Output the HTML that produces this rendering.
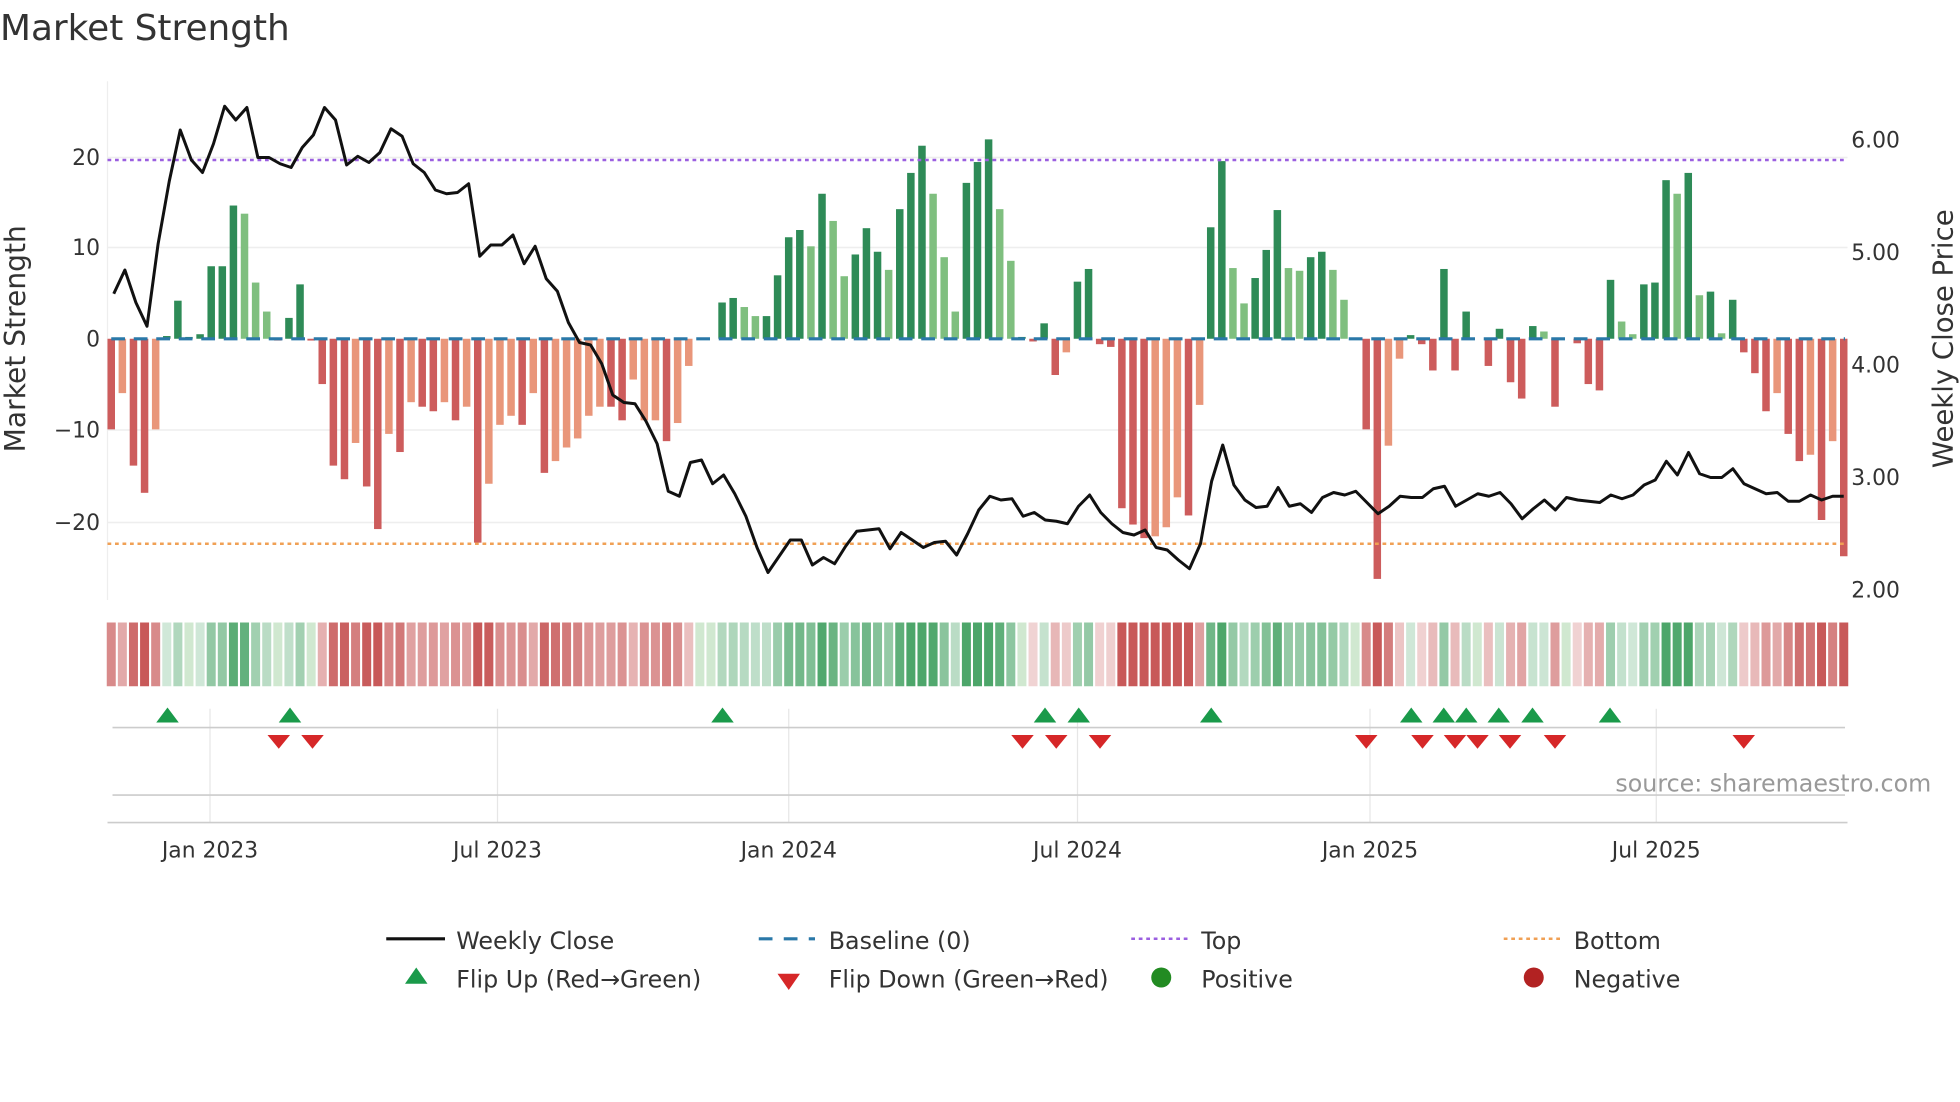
<!DOCTYPE html>
<html><head><meta charset="utf-8">
<style>
html,body{margin:0;padding:0;background:#fff;width:1960px;height:1102px;overflow:hidden}
svg{display:block}
text{font-family:"DejaVu Sans","Liberation Sans",sans-serif;fill:#333}
</style></head><body>
<svg id="s" width="1960" height="1102" viewBox="0 0 1568 881.6" xmlns="http://www.w3.org/2000/svg">
<rect width="1568" height="882" fill="#fff"/>
<text x="0" y="32" font-size="28.7">Market Strength</text>
<g id="grid"></g>
<g id="bars"></g>
<line x1="86" y1="128" x2="1476" y2="128" stroke="#9b5fe0" stroke-width="2" stroke-dasharray="3,3"/>
<line x1="86" y1="435" x2="1476" y2="435" stroke="#f0a055" stroke-width="2" stroke-dasharray="3,3"/>
<line x1="89" y1="271" x2="1476" y2="271" stroke="#2a78a8" stroke-width="2.5" stroke-dasharray="11,7"/>
<polyline id="pl" fill="none" stroke="#111" stroke-width="2.4" stroke-linejoin="round"/>
<g id="strip"></g>
<g id="marks"></g>
<g font-size="17.5">
<text x="80" y="132" text-anchor="end">20</text>
<text x="80" y="204" text-anchor="end">10</text>
<text x="80" y="277" text-anchor="end">0</text>
<text x="80" y="350" text-anchor="end">−10</text>
<text x="80" y="424" text-anchor="end">−20</text>
<text x="1481" y="118">6.00</text>
<text x="1481" y="208">5.00</text>
<text x="1481" y="298">4.00</text>
<text x="1481" y="388">3.00</text>
<text x="1481" y="478">2.00</text>
<text x="168" y="686" text-anchor="middle">Jan 2023</text>
<text x="398" y="686" text-anchor="middle">Jul 2023</text>
<text x="631" y="686" text-anchor="middle">Jan 2024</text>
<text x="862" y="686" text-anchor="middle">Jul 2024</text>
<text x="1096" y="686" text-anchor="middle">Jan 2025</text>
<text x="1325" y="686" text-anchor="middle">Jul 2025</text>
</g>
<text transform="translate(20,271) rotate(-90)" font-size="22.5" text-anchor="middle">Market Strength</text>
<text transform="translate(1562,271) rotate(-90)" font-size="22" text-anchor="middle">Weekly Close Price</text>
<text x="1545" y="633" font-size="19" text-anchor="end" style="fill:#999">source: sharemaestro.com</text>
<g font-size="19">
<line x1="309" y1="751" x2="356" y2="751" stroke="#111" stroke-width="2.5"/>
<text x="365" y="759">Weekly Close</text>
<line x1="607" y1="751" x2="652" y2="751" stroke="#2a78a8" stroke-width="2.5" stroke-dasharray="11,9"/>
<text x="663" y="759">Baseline (0)</text>
<line x1="905" y1="751" x2="950" y2="751" stroke="#9b5fe0" stroke-width="2" stroke-dasharray="3,3"/>
<text x="961" y="759">Top</text>
<line x1="1203" y1="751" x2="1248" y2="751" stroke="#f0a055" stroke-width="2" stroke-dasharray="3,3"/>
<text x="1259" y="759">Bottom</text>
<polygon points="333,774 324,787 342,787" fill="#1a9a4a"/>
<text x="365" y="790">Flip Up (Red→Green)</text>
<polygon points="622,779 640,779 631,792" fill="#d62728"/>
<text x="663" y="790">Flip Down (Green→Red)</text>
<circle cx="929" cy="782" r="8" fill="#228b22"/>
<text x="961" y="790">Positive</text>
<circle cx="1227" cy="782" r="8" fill="#b22222"/>
<text x="1259" y="790">Negative</text>
</g>
</svg>
<script>
var NS="http://www.w3.org/2000/svg";
function el(p,t,a){var e=document.createElementNS(NS,t);for(var k in a)e.setAttribute(k,a[k]);document.getElementById(p).appendChild(e);return e;}
[126,198,344,418].forEach(function(y){el("grid","line",{x1:86,x2:1478,y1:y,y2:y,stroke:"#eeeeee","stroke-width":1.2});});
el("grid","line",{x1:86,x2:86,y1:65,y2:480,stroke:"#eee","stroke-width":1});
[168,398,631,862,1096,1325].forEach(function(x){el("grid","line",{x1:x,x2:x,y1:567,y2:658,stroke:"#e6e6e6","stroke-width":1});});
el("grid","line",{x1:90,x2:1476,y1:582,y2:582,stroke:"#ccc","stroke-width":1.3});
el("grid","line",{x1:90,x2:1476,y1:636,y2:636,stroke:"#ccc","stroke-width":1.3});
el("grid","line",{x1:86,x2:1478,y1:658,y2:658,stroke:"#ccc","stroke-width":1.3});
var B=[[-10,1],[-6,0],[-14,1],[-17,1],[-10,0],[0.3,1],[4.2,1],[0.2,1],[0.5,1],[8,1],[8,1],[14.7,1],[13.8,0],[6.2,0],[3,0],[-0.2,1],[2.3,1],[6,1],[-0.2,1],[-5,1],[-14,1],[-15.5,1],[-11.5,0],[-16.3,1],[-21,1],[-10.5,0],[-12.5,1],[-7,0],[-7.5,1],[-8,1],[-7,0],[-9,1],[-7.5,0],[-22.5,1],[-16,0],[-9.5,0],[-8.5,0],[-9.5,1],[-6,0],[-14.8,1],[-13.5,0],[-12,0],[-11,0],[-8.5,0],[-7.5,0],[-7.5,1],[-9,1],[-4.5,0],[-9,0],[-9,0],[-11.3,1],[-9.3,0],[-3,0],[0,0],[0,0],[4,1],[4.5,1],[3.5,0],[2.5,0],[2.5,1],[7,1],[11.2,1],[12,1],[10.2,0],[16,1],[13,0],[6.9,0],[9.3,1],[12.2,1],[9.6,1],[7.6,0],[14.3,1],[18.3,1],[21.3,1],[16,0],[9,0],[3,0],[17.2,1],[19.5,1],[22,1],[14.3,0],[8.6,0],[0.2,1],[-0.3,1],[1.7,1],[-4,1],[-1.5,0],[6.3,1],[7.7,1],[-0.6,1],[-0.9,1],[-18.7,1],[-20.5,1],[-22,1],[-21.8,0],[-20.8,0],[-17.5,0],[-19.5,1],[-7.3,0],[12.3,1],[19.6,1],[7.8,0],[3.9,0],[6.7,1],[9.8,1],[14.2,1],[7.8,0],[7.5,0],[9,1],[9.6,1],[7.6,0],[4.3,0],[0,0],[-10,1],[-26.5,1],[-11.8,0],[-2.2,0],[0.4,1],[-0.6,1],[-3.5,1],[7.7,1],[-3.5,1],[3,1],[0,0],[-3,1],[1.1,1],[-4.8,1],[-6.6,1],[1.4,1],[0.8,0],[-7.5,1],[0,0],[-0.5,1],[-5,1],[-5.7,1],[6.5,1],[1.9,0],[0.5,0],[6,1],[6.2,1],[17.5,1],[16,0],[18.3,1],[4.8,0],[5.2,1],[0.6,0],[4.3,1],[-1.5,1],[-3.8,1],[-8,1],[-6,0],[-10.5,1],[-13.5,1],[-12.8,0],[-20,1],[-11.3,0],[-24,1]];
var N=B.length,x0=89,x1=1475,st=(x1-x0)/(N-1);
B.forEach(function(b,i){
 var x=x0+i*st,v=b[0],h=Math.abs(v)*7.25;
 var c=v>=0?(b[1]?"#2e8b57":"#7fbf7f"):(b[1]?"#cd5c5c":"#e9967a");
 if(h>0.3)el("bars","rect",{x:x-3,y:v>=0?271-h:271,width:6,height:h,fill:c});
 var a=Math.min(1,0.25+Math.abs(v)/22);
 var sc=v>=0?"rgba(46,150,80,"+(a*0.85)+")":"rgba(190,60,60,"+(a*0.85)+")";
 if(Math.abs(v)<0.3)sc="rgba(120,190,120,0.35)";
 el("strip","rect",{x:x-3.6,y:498,width:7.2,height:51,fill:sc});
});
var L=[235,216,242,261,195,145,104,128,138,115,85,96,86,126,126,131,134,118,108,86,96,132,125,130,122,103,109,131,138,152,155,154,147,205,196,196,188,211,197,223,233,258,274,276,291,316,322,323,337,355,393,397,370,368,387,380,395,413,438,458,445,432,432,452,446,451,437,425,424,423,439,426,432,438,434,433,444,427,408,397,400,399,413,410,416,417,419,405,396,410,419,426,428,424,438,440,448,455,435,385,356,388,400,406,405,390,405,403,410,398,394,396,393,402,411,405,397,398,398,391,389,405,400,395,397,394,403,415,407,400,408,398,400,401,402,396,399,396,388,384,369,380,362,379,382,382,375,387,391,395,394,401,401,396,400,397,397];
var M=L.length,pts=[];
L.forEach(function(y,i){pts.push((91+i*(1475-91)/(M-1)).toFixed(1)+","+y);});
document.getElementById("pl").setAttribute("points",pts.join(" "));
[134,232,578,836,863,969,1129,1155,1173,1199,1226,1288].forEach(function(x){el("marks","polygon",{points:(x)+",566 "+(x-9)+",578 "+(x+9)+",578",fill:"#1a9a4a"});});
[223,250,818,845,880,1093,1138,1164,1182,1208,1244,1395].forEach(function(x){el("marks","polygon",{points:(x-9)+",588 "+(x+9)+",588 "+x+",599",fill:"#d62728"});});
</script>
</body></html>
